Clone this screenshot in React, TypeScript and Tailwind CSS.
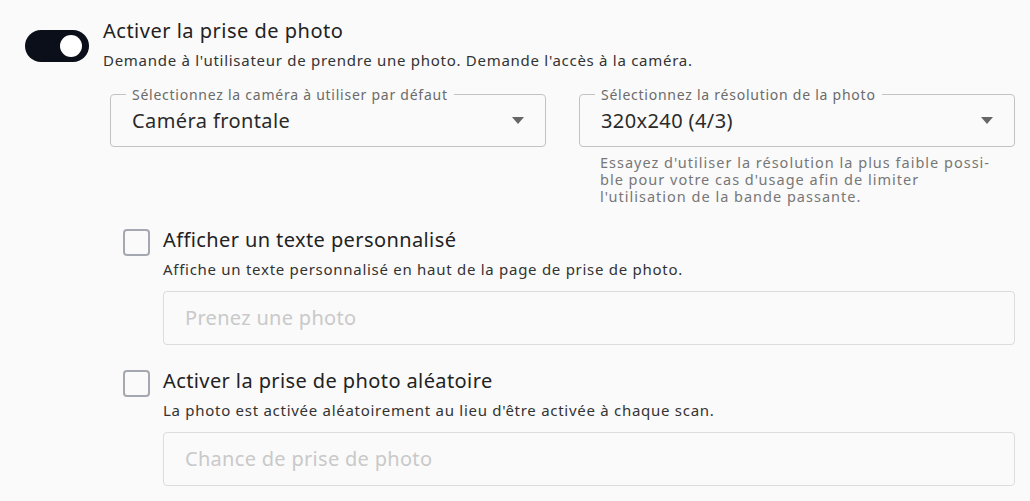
import React from 'react';

const font = { fontFamily: '"Noto Sans", "Open Sans", sans-serif' };

function Toggle() {
  return (
    <div className="relative h-[32px] w-[64px] shrink-0 rounded-full bg-[#0b0f19]">
      <span className="absolute left-[35px] top-[5px] h-[22px] w-[22px] rounded-full bg-white" />
    </div>
  );
}

function Caret() {
  return (
    <svg width="12" height="7" viewBox="0 0 12 7" className="shrink-0">
      <path d="M0 0h12L6 7z" fill="#666" />
    </svg>
  );
}

function SelectField({ label, value }: { label: string; value: string }) {
  return (
    <fieldset className="h-[61px] rounded border border-[#c2c2c2] px-[21px]">
      <legend className="-ml-[6px] px-[6px] text-[14px] leading-[17px] tracking-[0.75px] text-[#6b6b6b]">
        {label}
      </legend>
      <div className="flex h-[44px] items-center justify-between pb-[9px]">
        <span className="text-[20px] tracking-[0.4px] text-[#2a2a2a]">{value}</span>
        <Caret />
      </div>
    </fieldset>
  );
}

function CheckOption({ title, desc, placeholder }: { title: string; desc: string; placeholder: string }) {
  return (
    <div className="flex gap-[13px]">
      <div className="mt-[3px] h-[27px] w-[27px] shrink-0 rounded-[4px] border-[2.5px] border-[#a6a8b1]" />
      <div className="flex-1">
        <div className="text-[20px] leading-[28px] tracking-[0.4px] text-[#222]">{title}</div>
        <div className="mt-[6px] text-[15px] leading-[18px] tracking-[0.72px] text-[#333]">{desc}</div>
        <div className="mt-[13px] flex h-[54px] items-center rounded border border-[#dcdcdc] px-[21px]">
          <span className="text-[20px] tracking-[0.3px] text-[#c9c9c9]">{placeholder}</span>
        </div>
      </div>
    </div>
  );
}

export default function App() {
  return (
    <div className="min-h-screen w-[1030px] bg-[#fafafa] pr-[15px]" style={font}>
      <div className="flex gap-[14px] pl-[25px] pt-[17px]">
        <div className="pt-[13px]">
          <Toggle />
        </div>
        <div className="flex-1">
          <div className="text-[20px] leading-[28px] tracking-[0.5px] text-[#222]">Activer la prise de photo</div>
          <div className="mt-[6px] text-[15px] leading-[18px] tracking-[0.72px] text-[#333]">
            Demande à l'utilisateur de prendre une photo. Demande l'accès à la caméra.
          </div>
        </div>
      </div>

      <div className="mt-[17px] grid grid-cols-2 gap-[33px] pl-[110px]">
        <SelectField label="Sélectionnez la caméra à utiliser par défaut" value="Caméra frontale" />
        <div>
          <SelectField label="Sélectionnez la résolution de la photo" value="320x240 (4/3)" />
          <p className="mt-[7px] whitespace-nowrap px-[21px] text-[14.5px] leading-[17px] tracking-[1px] text-[#777]">
            Essayez d'utiliser la résolution la plus faible possi-
            <br />
            ble pour votre cas d'usage afin de limiter
            <br />
            l'utilisation de la bande passante.
          </p>
        </div>
      </div>

      <div className="mt-[21px] flex flex-col gap-[22px] pl-[123px]">
        <CheckOption
          title="Afficher un texte personnalisé"
          desc="Affiche un texte personnalisé en haut de la page de prise de photo."
          placeholder="Prenez une photo"
        />
        <CheckOption
          title="Activer la prise de photo aléatoire"
          desc="La photo est activée aléatoirement au lieu d'être activée à chaque scan."
          placeholder="Chance de prise de photo"
        />
      </div>
    </div>
  );
}
